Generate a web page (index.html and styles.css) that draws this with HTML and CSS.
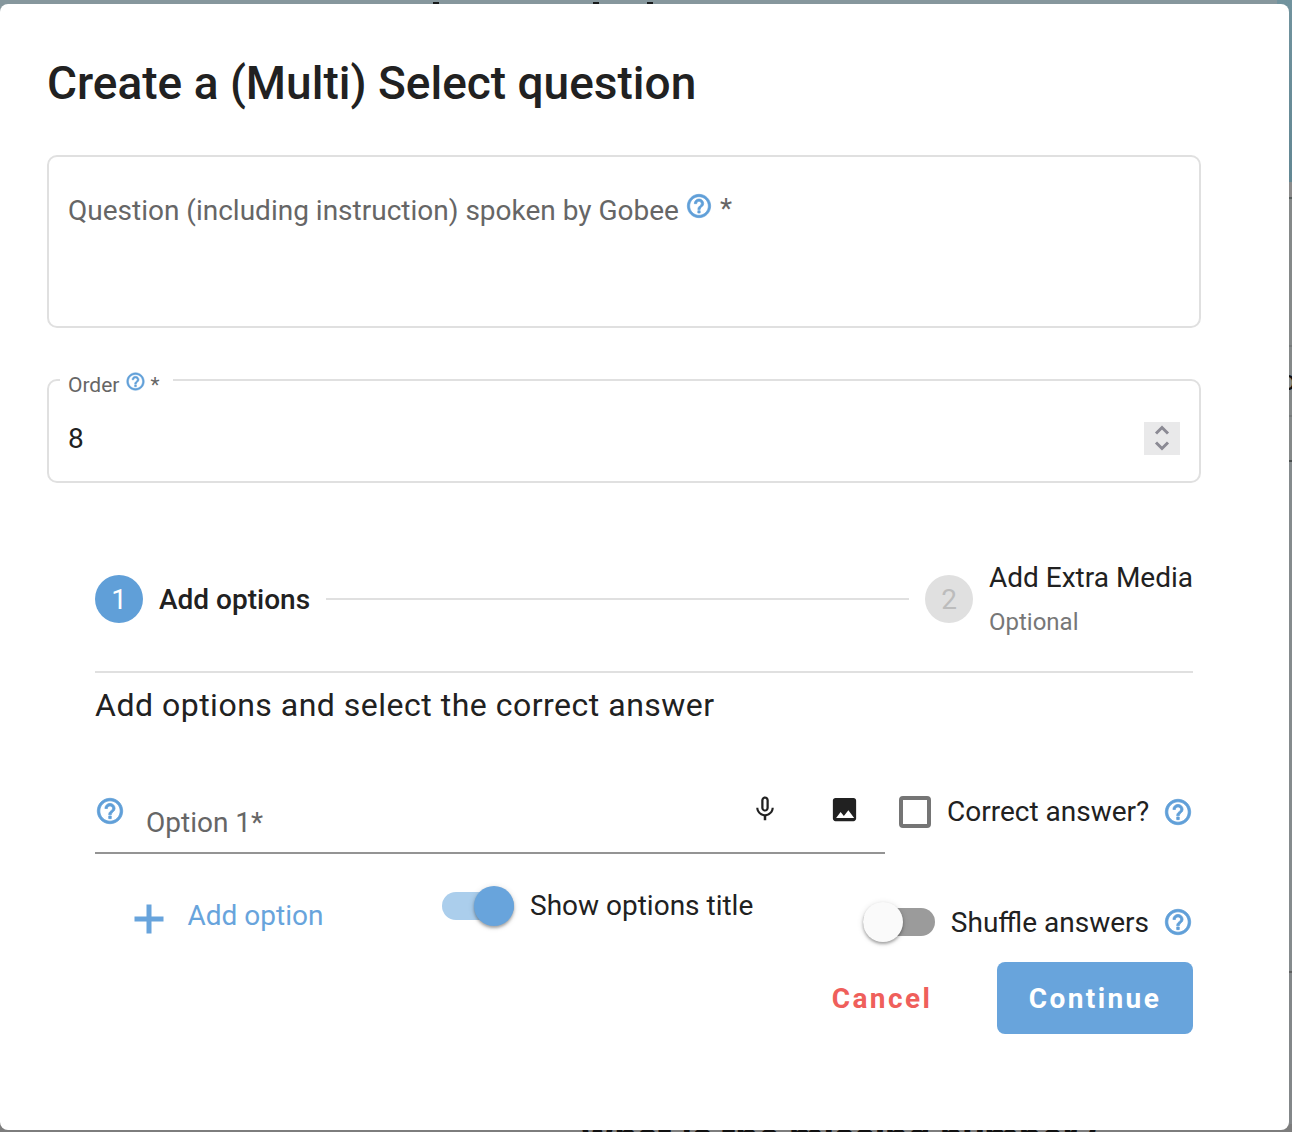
FILE: index.html
```html
<!DOCTYPE html>
<html lang="en">
<head>
<meta charset="utf-8">
<title>Create a question</title>
<link rel="stylesheet" href="styles.css">
</head>
<body>
<svg class="defs" width="0" height="0">
  <symbol id="help" viewBox="0 0 24 24"><path d="M11 18h2v-2h-2v2zm1-16C6.48 2 2 6.48 2 12s4.480 10 10 10 10-4.480 10-10S17.520 2 12 2zm0 18c-4.410 0-8-3.590-8-8s3.590-8 8-8 8 3.590 8 8-3.590 8-8 8zm0-14c-2.210 0-4 1.790-4 4h2c0-1.100.9-2 2-2s2 .9 2 2c0 2-3 1.750-3 5h2c0-2.250 3-2.500 3-5 0-2.210-1.790-4-4-4z"/></symbol>
</svg>
<div class="backdrop">
  <div class="back-top"><i class="stem stem-a"></i><i class="stem stem-b"></i><i class="stem stem-c"></i></div>
  <div class="back-side"><div class="side-blue"></div><div class="side-row r1"></div><div class="side-row r2"></div><div class="side-row r3"></div><div class="side-row r4"></div><div class="side-row r5"></div><div class="side-row r6"></div></div>
  <span class="back-letter">o</span>
  <span class="back-question">What is the missing number?</span>
</div>
<main class="dialog">
  <h1 class="title">Create a (Multi) Select question</h1>
  <div class="question-field">
    <span>Question (including instruction) spoken by Gobee</span>
    <svg class="icon q-help"><use href="#help"/></svg>
    <span class="q-star">*</span>
  </div>
  <fieldset class="order-field">
    <legend><span>Order</span><svg class="icon o-help"><use href="#help"/></svg><span class="o-star">*</span></legend>
    <div class="order-row">
      <span>8</span>
      <span class="spinner"><svg width="36" height="33" viewBox="0 0 36 33"><path d="M12 11.500l6-6 6 6M12 20.500l6 6 6-6"/></svg></span>
    </div>
  </fieldset>
  <section class="stepper">
    <header class="steps">
      <span class="badge active">1</span>
      <span class="step-name strong">Add options</span>
      <span class="step-line"></span>
      <span class="badge">2</span>
      <span class="step-text"><span class="step-name">Add Extra Media</span><span class="step-note">Optional</span></span>
    </header>
    <h2 class="subtitle">Add options and select the correct answer</h2>
    <div class="option-row">
      <div class="option-input">
        <svg class="icon help"><use href="#help"/></svg>
        <span class="option-label">Option 1*</span>
        <svg class="icon mic" viewBox="0 0 24 24"><path d="M12 14c1.660 0 2.990-1.340 2.990-3L15 5c0-1.660-1.340-3-3-3S9 3.340 9 5v6c0 1.660 1.340 3 3 3zm-1.200-9.100c0-.66.54-1.200 1.200-1.200.66 0 1.200.54 1.200 1.200l-.01 6.200c0 .66-.53 1.200-1.190 1.200-.66 0-1.200-.54-1.200-1.200V4.900zm6.500 6.100c0 3-2.540 5.100-5.300 5.100S6.700 14 6.700 11H5c0 3.410 2.720 6.230 6 6.720V21h2v-3.280c3.280-.48 6-3.300 6-6.720h-1.700z"/></svg>
        <svg class="icon image" viewBox="0 0 24 24"><path d="M21 19V5c0-1.100-.9-2-2-2H5c-1.100 0-2 .9-2 2v14c0 1.100.9 2 2 2h14c1.100 0 2-.9 2-2zM5.500 18.500l3.500-4.500 2.500 3.010L15 12.500l4.500 6h-14z"/></svg>
      </div>
      <span class="checkbox"></span>
      <span class="check-label">Correct answer?</span>
      <svg class="icon help check-help"><use href="#help"/></svg>
    </div>
    <div class="controls">
      <div class="add"><svg width="30" height="30" viewBox="0 0 30 30"><path d="M15 .5v29M.5 15h29"/></svg><span>Add option</span></div>
      <div class="toggle show"><span class="switch on"><span class="track"></span><span class="knob"></span></span><span class="show-label">Show options title</span></div>
      <div class="toggle shuffle"><span class="switch"><span class="track"></span><span class="knob"></span></span><span>Shuffle answers</span><svg class="icon help"><use href="#help"/></svg></div>
    </div>
    <footer class="actions">
      <button class="cancel">Cancel</button>
      <button class="continue">Continue</button>
    </footer>
  </section>
</main>
</body>
</html>
```
FILE: styles.css
```css
* { box-sizing: border-box; }
body {
  margin: 0;
  width: 1292px;
  height: 1132px;
  position: relative;
  overflow: hidden;
  background: #7d7d7d;
  font-family: Roboto, sans-serif;
  font-size: 28px;
  color: #212121;
}
.defs { position: absolute; }
.icon { display: block; flex: none; fill: #609fd8; }
.help, .q-help, .o-help { stroke: #609fd8; stroke-width: .6; }

/* Dimmed page under the dialog */
.backdrop { position: absolute; inset: 0; overflow: hidden; }
.back-top { position: absolute; top: 0; left: 0; width: 1277px; height: 20px; background: #86979d; }
.stem { position: absolute; top: 2px; width: 6px; height: 4px; background: #171a1b; }
.stem-a { left: 433px; }
.stem-b { left: 593px; }
.stem-c { left: 647px; }
.back-side { position: absolute; top: 0; right: 0; width: 15px; height: 1124px; background: #858989; }
.side-blue { height: 182px; background: linear-gradient(#71939e, #628793); }
.side-row { border-bottom: 2px solid #777b7b; }
.r1 { height: 17px; background: #8b8b8b; border-bottom-color: #59605f; }
.r2 { height: 148px; }
.r3 { height: 70px; }
.r4 { height: 45px; border-bottom-color: #4c5151; }
.r5 { height: 511px; background: #858b8d; border-bottom-color: #606262; }
.r6 { height: 151px; border: 0; background: #838789; }
.back-letter { position: absolute; left: 1280px; top: 364px; font-size: 28px; color: #111; }
.back-question { position: absolute; left: 580px; top: 1113px; font-size: 39.7px; line-height: 47px; font-weight: 700; color: #111; white-space: nowrap; }

.dialog {
  position: relative;
  width: 1289px;
  height: 1126px;
  margin-top: 4px;
  padding: 0 88px 0 47px;
  background: #fff;
  border-radius: 8px;
  display: flex;
  flex-direction: column;
}
.title { margin: 0; height: 151px; padding-top: 52px; font-size: 46px; line-height: 54px; font-weight: 500; white-space: nowrap; }
.question-field {
  height: 173px;
  border: 2px solid #e0e0e0;
  border-radius: 10px;
  padding: 35px 19px 0;
  display: flex;
  align-items: flex-start;
  line-height: 38px;
  color: #666;
}
.q-help { width: 28px; height: 28px; margin: 0 0 0 6.500px; }
.q-star { margin-left: 6.500px; margin-top: -2px; }
.order-field {
  height: 113px;
  margin: 42px 0 0;
  border: 2px solid #e0e0e0;
  border-radius: 10px;
  padding: 0 19px;
}
.order-field legend {
  margin-left: -8px;
  padding: 10px 13px 0 8px;
  height: 20px;
  line-height: 20px;
  font-size: 21px;
  color: #666;
  display: flex;
  align-items: center;
}
.o-help { width: 21px; height: 21px; margin: -7px 0 0 6px; }
.o-star { margin: -1px 0 0 4px; }
.order-row { display: flex; align-items: center; justify-content: space-between; margin-top: 32px; height: 33px; }
.spinner { width: 36px; height: 33px; background: #e9e9ea; }
.spinner svg { display: block; fill: none; stroke: #8b8a94; stroke-width: 3; }

.stepper { margin: 66px 8px 0 48px; }
.steps { height: 124px; border-bottom: 2px solid #e0e0e0; display: flex; align-items: flex-start; padding-top: 8px; }
.badge { width: 48px; height: 48px; margin-top: 18px; border-radius: 50%; background: #e0e0e0; color: #bcbcbc; line-height: 50px; text-align: center; flex: none; }
.badge.active { background: #609fd8; color: #fff; }
.step-name { line-height: 38px; white-space: nowrap; }
.strong { margin: 24px 0 0 16px; font-weight: 500; }
.step-line { flex: 1; height: 2px; margin: 41px 16px 0; background: #e0e0e0; }
.step-text { margin: 2px 0 0 16px; display: flex; flex-direction: column; }
.step-note { font-size: 24px; line-height: 30px; margin-top: 10px; color: #777; align-self: flex-start; }
.subtitle { margin: 0; height: 121px; padding-top: 12px; font-size: 32px; line-height: 40px; font-weight: 400; letter-spacing: .5px; white-space: nowrap; }
.option-row { display: flex; align-items: flex-start; height: 92px; }
.option-input { width: 790px; height: 60px; border-bottom: 2px solid #949494; display: flex; align-items: flex-start; }
.help { width: 32px; height: 32px; padding: .75px; }
.option-input .help { margin: 1px 0 0 -1px; }
.option-label { width: 600px; margin: 10px 0 0 20px; line-height: 38px; color: #666; }
.mic { width: 30px; height: 30px; fill: #212121; margin-left: 4px; }
.image { width: 31px; height: 31px; fill: #212121; margin: -.5px 0 0 49px; }
.checkbox { width: 32px; height: 32px; margin: 2px 0 0 14px; border: 4px solid #757575; border-radius: 4px; }
.check-label { margin: -1px 0 0 16px; line-height: 38px; white-space: nowrap; }
.check-help { margin: 2px -1px 0 auto; }
.controls { display: flex; align-items: flex-start; height: 76px; }
.add { display: flex; align-items: center; margin: 11px 0 0 39px; color: #68a4dc; width: 308px; }
.add svg { margin: 7px 23.500px 0 0; stroke: #68a4dc; stroke-width: 5; }
.toggle { display: flex; align-items: center; gap: 16px; height: 40px; white-space: nowrap; }
.toggle.shuffle { margin: 16px -1px 0 auto; }
.shuffle .help { margin-left: -3px; }
.show-label { margin-top: -2px; }
.switch { width: 72px; height: 40px; display: grid; align-items: center; }
.track, .knob { grid-area: 1 / 1; }
.track { height: 28px; width: 72px; border-radius: 14px; background: #9b9b9b; }
.knob { width: 40px; height: 40px; border-radius: 50%; background: #fafafa; box-shadow: 0 2px 3px rgba(0,0,0,.3), 0 1px 6px rgba(0,0,0,.13); }
.on .track { background: #abceec; }
.on .knob { margin-left: 32px; background: #68a4dc; }
.actions { display: flex; justify-content: flex-end; }
button { font: 700 28px Roboto, sans-serif; letter-spacing: 2.400px; border: 0; height: 72px; border-radius: 8px; padding: 0; }
.cancel { width: 164px; background: none; color: #ef5f5b; }
.continue { width: 196px; margin-left: 33px; background: #68a4dc; color: #fff; }
```
